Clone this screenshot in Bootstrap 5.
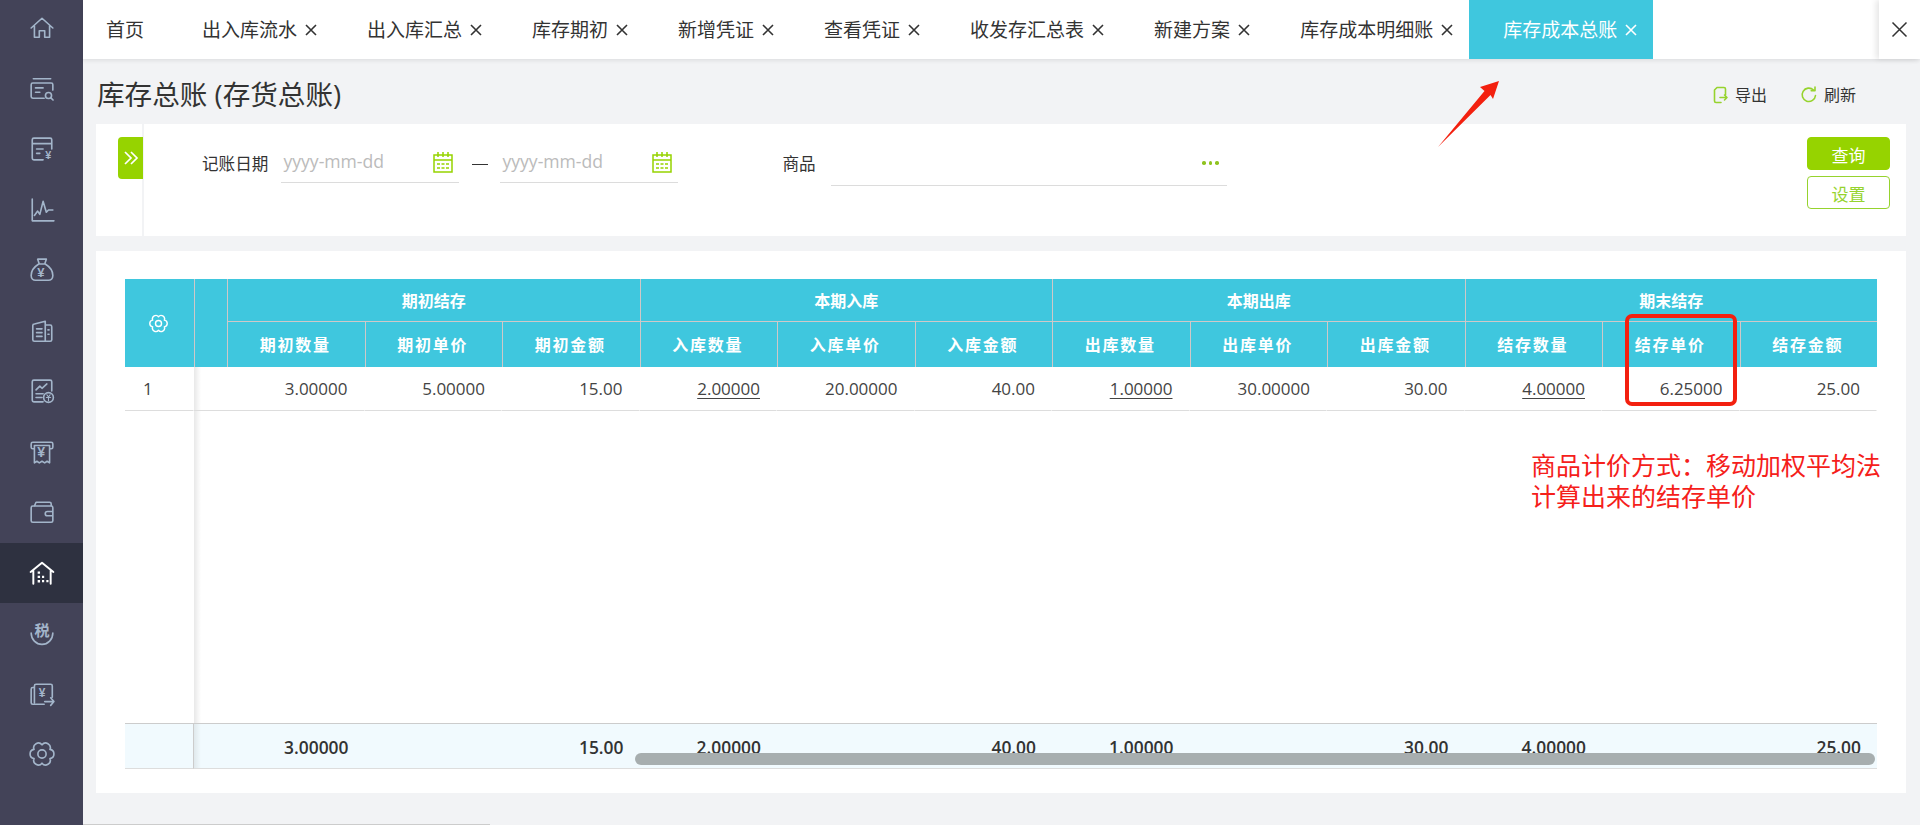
<!DOCTYPE html>
<html lang="zh-CN">
<head>
<meta charset="utf-8">
<title>库存总账</title>
<link rel="stylesheet" href="https://cdn.jsdelivr.net/npm/bootstrap@5.3.0/dist/css/bootstrap.min.css">
<style>
html,body{height:825px;overflow:hidden}
body{font-family:"Open Sans","Noto Sans CJK SC",sans-serif;background:#f2f3f5;color:#333;font-size:16px;position:relative}
.side-rail{width:83px;height:825px;background:#434358;flex:none}
.rail-list{margin-top:-2px}
.rail-item{height:60.5px;color:#a3b5ca}
.rail-item svg{width:26px;height:26px;fill:none;stroke:currentColor;stroke-width:1.5;stroke-linecap:round;stroke-linejoin:round}
.rail-item text{font-family:"Liberation Sans","Noto Sans CJK SC",sans-serif;fill:currentColor;stroke:none;font-weight:700}
.rail-item.is-on{background:#2e3140;color:#fff}
.main-pane{min-width:0;height:825px}
.tab-strip{height:59px;background:#fff;box-shadow:0 2px 4px rgba(0,0,0,.08);position:relative;z-index:2;flex:none}
.tab-link{height:59px;padding:1px 16px 0 34px;font-size:19px;color:#333;white-space:nowrap;line-height:1;flex:none;text-decoration:none}
.tab-link.tab-home{padding:1px 24px 0 23px}
.tab-link.tab-on{background:#3fc7de;color:#fff}
.tab-x{width:12px;height:12px;margin-left:8px;stroke:currentColor;stroke-width:1.6;fill:none}
.tab-end{width:41px;height:59px;background:#fff;box-shadow:-3px 0 6px rgba(0,0,0,.1);color:#333;flex:none}
.tab-end svg{width:17px;height:17px;stroke:currentColor;stroke-width:1.5;fill:none}
.content-wrap{padding:0 14px 0 13px}
.title-row{height:65px;padding-left:1px;padding-top:7px}
.page-title{font-size:27.6px;line-height:1;font-weight:400;color:#333;margin:0}
.act-row{gap:33px;margin-right:50px}
.act-link{font-size:16px;color:#333;text-decoration:none;line-height:1;gap:6px}
.act-link svg{width:18px;height:18px;fill:none;stroke:#96d32e;stroke-width:1.6;stroke-linecap:round;stroke-linejoin:round}
.filter-panel{height:112px;background:#fff;position:relative}
.filter-flap{width:48px;height:112px;border-right:2px solid #f2f3f5;padding:13px 0 0 22px;flex:none}
.flap-btn{width:25px;height:42px;background:#96d300;border-radius:4px 0 0 4px}
.flap-btn svg{width:16px;height:16px;fill:none;stroke:#fff;stroke-width:1.7}
.filter-main{padding-left:58px;padding-top:20px}
.filter-label{font-size:16.6px;color:#333;line-height:1;margin-top:12px}
.label-date{margin-right:13px}
.label-goods{margin-left:104px;margin-right:15px}
.date-box{width:178px;height:39px;border-bottom:1px solid #dcdcdc;color:#bbb;font-size:17.6px;line-height:1;padding-left:2px;padding-bottom:3px}
.date-box svg{width:20px;height:22px;margin-right:6px;fill:none;stroke:#96d300;stroke-width:1.5}
.dash-mark{width:16px;height:1px;background:#333;margin:20px 12px 0 13px}
.goods-box{width:396px;height:42px;border-bottom:1px solid #dcdcdc;padding-right:8px;padding-bottom:3px}
.dot-trio{gap:3px}
.dot-trio i{width:3.500px;height:3.500px;background:#8fc31f;border-radius:50%;display:block}
.btn-stack{width:83px;margin-right:16px;margin-top:13px;gap:6px}
.btn-find,.btn-conf{height:33px;padding:3px 0 0;font-size:17px;line-height:1;border-radius:4px}
.btn-find{background:#96d300;border:1px solid #96d300;color:#fff}
.btn-conf{background:#fff;border:1px solid #96d32e;color:#96d32e}
.ledger-panel{height:542px;margin-top:15px;background:#fff;padding:28px 29px 0;position:relative}
.ledger{table-layout:fixed;width:1752px;border-collapse:separate;border-spacing:0;margin:0;--bs-table-bg:transparent;--bs-table-color:#444;--bs-table-border-color:transparent}
.ledger th,.ledger td{padding:0;vertical-align:middle;box-shadow:none;line-height:1}
.ledger thead th{background:#3fc7de;color:#fff;text-align:center;font-weight:700;font-size:16px;border-left:1px solid #cfc8c8;border-bottom:0}
.ledger thead th.gear-cell{border-left:0;padding-right:2px}
.ledger .row-top{height:43px}
.ledger .row-top .grp{border-bottom:1px solid #cfc8c8;padding-top:2px}
.ledger .row-sub{height:45px}
.ledger .row-sub th{letter-spacing:1.7px;padding-right:2px}
.ledger .row-data{height:44px}
.ledger .row-data td{border-bottom:1px solid #ddd;border-right:1px solid #fff;text-align:right;padding-right:16px;font-size:17px;color:#444}
.ledger .row-data td.idx{text-align:left;padding-left:18px}
.ledger .row-data a{color:#444;text-decoration:underline;text-underline-offset:3px}
.ledger .row-gap{height:312px}
.ledger .row-gap td{border:0}
.ledger .shade{background:linear-gradient(90deg,rgba(0,0,0,.09),rgba(0,0,0,0) 7px)}
.ledger tbody .shade{border-right:0!important;padding:0!important}
.ledger tfoot td{height:46px;background:#f1fafe;border-top:1px solid #ccc;border-bottom:1px solid #ddd;text-align:right;padding:3px 16px 0 0;font-size:17.4px;font-weight:600;color:#333}
.ledger tfoot td:first-child{border-right:1px solid #ccc}
.ledger tfoot td.shade{background:linear-gradient(90deg,rgba(0,0,0,.07),rgba(0,0,0,0) 7px),#f1fafe}
.scroll-thumb{position:absolute;left:539px;top:502px;width:1240px;height:12px;border-radius:6px;background:#a7aeaf}
.mark-box{position:absolute;left:1529px;top:63px;width:112px;height:92px;border:4px solid #f3200f;border-radius:7px}
.mark-text{position:absolute;left:1435px;top:198px;color:#f5201a;font-size:25px;line-height:31px;white-space:nowrap;font-family:"Noto Sans CJK SC",sans-serif}
.mark-arrow{position:absolute;left:1430px;top:74px;width:75px;height:80px;z-index:3}
.foot-rule{position:absolute;left:83px;bottom:0;width:407px;height:1px;background:#ccc}
</style>
</head>
<body class="d-flex">
<aside class="side-rail">
  <div class="rail-list d-flex flex-column">
    <div class="rail-item d-flex align-items-center justify-content-center"><svg viewBox="0 0 24 24"><path d="M2 12 12 3l10 9M5 10v10.500h4.500V14.500h5v6H19V10"/></svg></div>
    <div class="rail-item d-flex align-items-center justify-content-center"><svg viewBox="0 0 24 24"><path d="M4 2.500h16M14 20.500H3.500a1.500 1.500 0 0 1-1.500-1.500V8a1.500 1.500 0 0 1 1.500-1.500h17A1.500 1.500 0 0 1 22 8v5M6 11h7M6 15h4"/><circle cx="18" cy="18" r="2.800"/><path d="m20.200 20.200 2 2"/></svg></div>
    <div class="rail-item d-flex align-items-center justify-content-center"><svg viewBox="0 0 24 24"><path d="M13 22H4.500A1.500 1.500 0 0 1 3 20.500v-17A1.500 1.500 0 0 1 4.500 2h15A1.500 1.500 0 0 1 21 3.500V12M3 7h18M7 12h6M7 16h3"/><text x="15" y="21.500" font-size="10">¥</text></svg></div>
    <div class="rail-item d-flex align-items-center justify-content-center"><svg viewBox="0 0 24 24"><path d="M3 2v20h20M5 17l3-4 2 3 3-12 3 10 2-2h4"/></svg></div>
    <div class="rail-item d-flex align-items-center justify-content-center"><svg viewBox="0 0 24 24"><path d="M8 2h8l-1.500 4.500h-5zM9 6.500C5 9 2 13 2 17c0 3 2 4.500 4 4.500h12c2 0 4-1.500 4-4.500 0-4-3-8-7-10.500"/><text x="7.500" y="18" font-size="12">¥</text></svg></div>
    <div class="rail-item d-flex align-items-center justify-content-center"><svg viewBox="0 0 24 24"><path d="M15 3 5 5.500a1.500 1.500 0 0 0-1.500 1.500v13a1.500 1.500 0 0 0 1.500 1.500h14.500A1.500 1.500 0 0 0 21 20V8a1.500 1.500 0 0 0-1.500-1.500H15zM15 3v18.500M7 10h5M7 13.500h5M7 17h5M17.500 11h1M17.500 15h1"/></svg></div>
    <div class="rail-item d-flex align-items-center justify-content-center"><svg viewBox="0 0 24 24"><path d="M13 22H4.500A1.500 1.500 0 0 1 3 20.500v-17A1.500 1.500 0 0 1 4.500 2h15A1.500 1.500 0 0 1 21 3.500V12M6.500 11 10 7.500l2 2L16.500 5.500M6.500 14.500H13M6.500 18H12"/><circle cx="18" cy="18" r="4.500"/><path d="m16.500 15.500 1.500 2 1.500-2M16 18h4M18 17.500V21" stroke-width="1"/></svg></div>
    <div class="rail-item d-flex align-items-center justify-content-center"><svg viewBox="0 0 24 24"><path d="M5 9H3.500A1.500 1.500 0 0 1 2 7.500V4.500A1.500 1.500 0 0 1 3.500 3h17A1.500 1.500 0 0 1 22 4.500v3A1.500 1.500 0 0 1 20.500 9H19M5 6h14v16l-2.300-1.500L14.500 22l-2.500-1.500L9.500 22l-2.200-1.500L5 22z"/><text x="7.500" y="17" font-size="13">¥</text></svg></div>
    <div class="rail-item d-flex align-items-center justify-content-center"><svg viewBox="0 0 24 24"><path d="M5 6.500 6.500 3H19a1.500 1.500 0 0 1 1.500 1.500v2M3.500 6.500h17A1.500 1.500 0 0 1 22 8v12a1.500 1.500 0 0 1-1.500 1.500h-17A1.500 1.500 0 0 1 2 20V8a1.500 1.500 0 0 1 1.500-1.500zM22 11.500h-5a1.500 1.500 0 0 0 0 4h5"/></svg></div>
    <div class="rail-item is-on d-flex align-items-center justify-content-center"><svg viewBox="0 0 24 24"><path d="M1.500 11 12 2.500 22.500 11M4 9.500V22M20 9.500V22" stroke-width="1.800"/><path d="M8 10.500h2.200v2.200H8zM8 14.500h2.200v2.200H8zM8 18.500h2.200v2.200H8zM12 14.500h2v2h-2zM12 18.500h2v2h-2zM16 18.500h2v2h-2z" fill="currentColor" stroke="none"/></svg></div>
    <div class="rail-item d-flex align-items-center justify-content-center"><svg viewBox="0 0 24 24"><text x="5" y="14.500" font-size="14">税</text><path d="M2 12c0 6 4.500 10.500 10 10.500S22 18 22 12"/></svg></div>
    <div class="rail-item d-flex align-items-center justify-content-center"><svg viewBox="0 0 24 24"><path d="M5 20V4.500A1.500 1.500 0 0 1 6.500 3H20a1.500 1.500 0 0 1 1.500 1.500V15M4.500 6H3.500A1.500 1.500 0 0 0 2 7.500V20a1.500 1.500 0 0 0 1.500 1.500H14M14.500 19H23M20 15.500l3 3.500-3 3.500"/><text x="9" y="14.500" font-size="11">¥</text></svg></div>
    <div class="rail-item d-flex align-items-center justify-content-center"><svg viewBox="0 0 24 24"><path d="M12 3.500A4.300 4.300 0 0 1 19.360 7.750 4.300 4.300 0 0 1 19.360 16.250 4.300 4.300 0 0 1 12 20.500 4.300 4.300 0 0 1 4.640 16.250 4.300 4.300 0 0 1 4.640 7.750 4.300 4.300 0 0 1 12 3.500z"/><circle cx="12" cy="12" r="3.800"/></svg></div>
  </div>
</aside>
<div class="main-pane flex-grow-1 d-flex flex-column">
  <div class="tab-strip d-flex align-items-stretch">
    <div class="d-flex flex-grow-1">
      <a class="tab-link tab-home d-flex align-items-center">首页</a>
      <a class="tab-link d-flex align-items-center">出入库流水<svg class="tab-x" viewBox="0 0 12 12"><path d="m1 1 10 10M11 1 1 11"/></svg></a>
      <a class="tab-link d-flex align-items-center">出入库汇总<svg class="tab-x" viewBox="0 0 12 12"><path d="m1 1 10 10M11 1 1 11"/></svg></a>
      <a class="tab-link d-flex align-items-center">库存期初<svg class="tab-x" viewBox="0 0 12 12"><path d="m1 1 10 10M11 1 1 11"/></svg></a>
      <a class="tab-link d-flex align-items-center">新增凭证<svg class="tab-x" viewBox="0 0 12 12"><path d="m1 1 10 10M11 1 1 11"/></svg></a>
      <a class="tab-link d-flex align-items-center">查看凭证<svg class="tab-x" viewBox="0 0 12 12"><path d="m1 1 10 10M11 1 1 11"/></svg></a>
      <a class="tab-link d-flex align-items-center">收发存汇总表<svg class="tab-x" viewBox="0 0 12 12"><path d="m1 1 10 10M11 1 1 11"/></svg></a>
      <a class="tab-link d-flex align-items-center">新建方案<svg class="tab-x" viewBox="0 0 12 12"><path d="m1 1 10 10M11 1 1 11"/></svg></a>
      <a class="tab-link d-flex align-items-center">库存成本明细账<svg class="tab-x" viewBox="0 0 12 12"><path d="m1 1 10 10M11 1 1 11"/></svg></a>
      <a class="tab-link tab-on d-flex align-items-center">库存成本总账<svg class="tab-x" viewBox="0 0 12 12"><path d="m1 1 10 10M11 1 1 11"/></svg></a>
    </div>
    <div class="tab-end d-flex align-items-center justify-content-center"><svg viewBox="0 0 17 17"><path d="m1.500 1.500 14 14M15.500 1.500l-14 14"/></svg></div>
  </div>
  <div class="content-wrap position-relative">
    <div class="title-row d-flex align-items-center justify-content-between">
      <h1 class="page-title">库存总账 (存货总账)</h1>
      <div class="act-row d-flex align-items-center">
        <a class="act-link d-flex align-items-center"><svg viewBox="0 0 18 18"><path d="M10 16.500H5A1.500 1.500 0 0 1 3.500 15V4L6 1.500h7A1.500 1.500 0 0 1 14.500 3v6M9 11.500h7M13.500 9l2.500 2.500-2.500 2.500"/></svg>导出</a>
        <a class="act-link d-flex align-items-center"><svg viewBox="0 0 18 18"><path d="M15.500 9.500A6.700 6.700 0 1 1 13.500 4M15 1v3.800h-3.800"/></svg>刷新</a>
      </div>
    </div>
    <div class="filter-panel d-flex">
      <div class="filter-flap"><div class="flap-btn d-flex align-items-center justify-content-center"><svg viewBox="0 0 16 16"><path d="m2 2 6 6-6 6M8 2l6 6-6 6"/></svg></div></div>
      <div class="filter-main flex-grow-1 d-flex align-items-start">
        <span class="filter-label label-date">记账日期</span>
        <div class="date-box d-flex align-items-center justify-content-between"><span>yyyy-mm-dd</span><svg viewBox="0 0 20 22"><path d="M1 4h18v17H1zM1 9h18M5 1v5M10 1v5M15 1v5M4 13h3M8.500 13h3M13 13h3M4 17h3M8.500 17h3M13 17h3"/></svg></div>
        <div class="dash-mark"></div>
        <div class="date-box d-flex align-items-center justify-content-between"><span>yyyy-mm-dd</span><svg viewBox="0 0 20 22"><path d="M1 4h18v17H1zM1 9h18M5 1v5M10 1v5M15 1v5M4 13h3M8.500 13h3M13 13h3M4 17h3M8.500 17h3M13 17h3"/></svg></div>
        <span class="filter-label label-goods">商品</span>
        <div class="goods-box d-flex align-items-center justify-content-end"><div class="dot-trio d-flex"><i></i><i></i><i></i></div></div>
      </div>
      <div class="btn-stack d-flex flex-column">
        <button type="button" class="btn btn-find">查询</button>
        <button type="button" class="btn btn-conf">设置</button>
      </div>
    </div>
    <div class="ledger-panel">
      <table class="table ledger">
        <colgroup><col style="width:69px"><col style="width:33px"><col span="12" style="width:137.5px"></colgroup>
        <thead>
          <tr class="row-top">
            <th rowspan="2" class="gear-cell"><svg width="19" height="19" viewBox="0 0 24 24" fill="none" stroke="#fff" stroke-width="1.800" stroke-linejoin="round"><path d="M12 3.500A4.300 4.300 0 0 1 19.360 7.750 4.300 4.300 0 0 1 19.360 16.250 4.300 4.300 0 0 1 12 20.500 4.300 4.300 0 0 1 4.640 16.250 4.300 4.300 0 0 1 4.640 7.750 4.300 4.300 0 0 1 12 3.500z"/><circle cx="12" cy="12" r="3.800"/></svg></th>
            <th rowspan="2"></th>
            <th colspan="3" class="grp">期初结存</th>
            <th colspan="3" class="grp">本期入库</th>
            <th colspan="3" class="grp">本期出库</th>
            <th colspan="3" class="grp">期末结存</th>
          </tr>
          <tr class="row-sub">
            <th>期初数量</th><th>期初单价</th><th>期初金额</th>
            <th>入库数量</th><th>入库单价</th><th>入库金额</th>
            <th>出库数量</th><th>出库单价</th><th>出库金额</th>
            <th>结存数量</th><th>结存单价</th><th>结存金额</th>
          </tr>
        </thead>
        <tbody>
          <tr class="row-data">
            <td class="idx">1</td><td class="shade"></td>
            <td>3.00000</td><td>5.00000</td><td>15.00</td>
            <td><a>2.00000</a></td><td>20.00000</td><td>40.00</td>
            <td><a>1.00000</a></td><td>30.00000</td><td>30.00</td>
            <td><a>4.00000</a></td><td>6.25000</td><td>25.00</td>
          </tr>
          <tr class="row-gap"><td></td><td class="shade"></td><td colspan="12"></td></tr>
        </tbody>
        <tfoot>
          <tr>
            <td></td><td class="shade"></td>
            <td>3.00000</td><td></td><td>15.00</td>
            <td>2.00000</td><td></td><td>40.00</td>
            <td>1.00000</td><td></td><td>30.00</td>
            <td>4.00000</td><td></td><td>25.00</td>
          </tr>
        </tfoot>
      </table>
      <div class="scroll-thumb"></div>
      <div class="mark-box"></div>
      <div class="mark-text">商品计价方式&#xFF1A;移动加权平均法<br>计算出来的结存单价</div>
    </div>
  </div>
</div>
<svg class="mark-arrow" viewBox="1430 74 75 80"><path d="M1438 147 1484.500 91 1480 87 1499 81 1493 99 1490.500 95z" fill="#f3200f"/></svg>
<div class="foot-rule"></div>
</body>
</html>
